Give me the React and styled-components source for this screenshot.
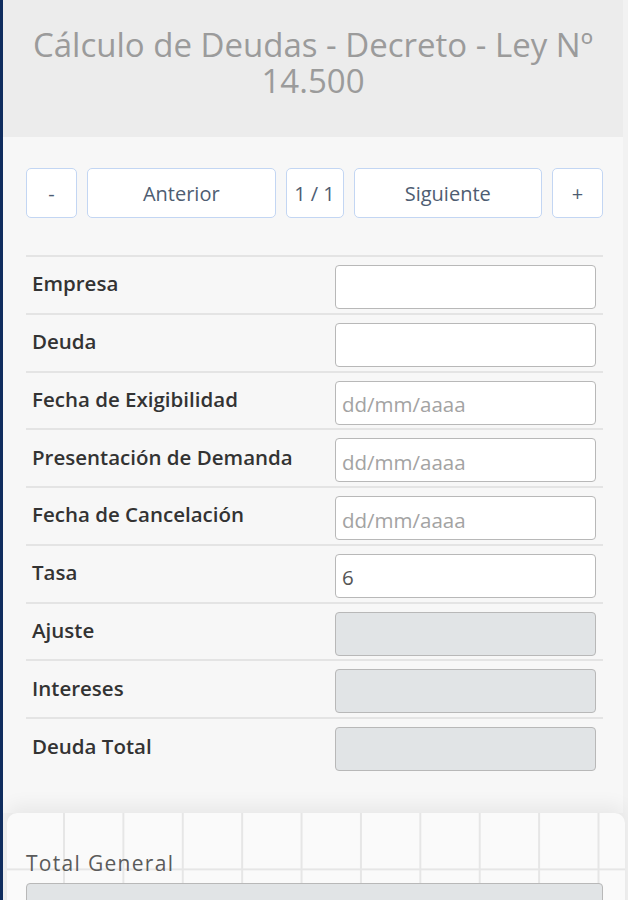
import React from 'react'
import styled, { createGlobalStyle } from 'styled-components'

const GlobalStyle = createGlobalStyle`
  html, body {
    margin: 0;
    padding: 0;
    background: #f2f2f2;
    font-family: "Open Sans", "Noto Sans", sans-serif;
  }
  * {
    box-sizing: border-box;
  }
`;

const Page = styled.div`
  min-height: 900px;
  border-left: 3px solid #102d5e;
  overflow: hidden;
`;

const Panel = styled.div`
  margin-right: 5px;
  background: #f7f7f7;
  padding-bottom: 36px;
`;

const Header = styled.div`
  height: 137px;
  background: #ececec;
  padding: 27px 10px 0;
`;

const Title = styled.h1`
  margin: 0;
  font-size: 33px;
  line-height: 36px;
  font-weight: 400;
  color: #9b9b9b;
  text-align: center;
`;

const Body = styled.div`
  padding: 31px 20px 0 23px;
`;

const Pager = styled.div`
  display: flex;
  gap: 10px;
  margin-bottom: 37px;
`;

const PagerButton = styled.button`
  flex: ${({ $grow }) => ($grow ? 1 : 'none')};
  width: ${({ $w }) => ($w ? `${$w}px` : 'auto')};
  height: 50px;
  background: #ffffff;
  border: 1.5px solid #c3d6f3;
  border-radius: 5px;
  font-family: "Open Sans", "Noto Sans", sans-serif;
  font-size: 20px;
  color: #4e5d72;
  padding: 0;
`;

const Table = styled.div`
  border-top: 2px solid #e4e4e4;
`;

const Row = styled.div`
  display: grid;
  grid-template-columns: 309px 1fr;
  height: 57.75px;
  border-bottom: ${({ $last }) => ($last ? 'none' : '2px solid #e4e4e4')};
`;

const Label = styled.div`
  display: flex;
  align-items: center;
  padding: 0 0 3px 6px;
  font-size: 20.5px;
  font-weight: 600;
  color: #333333;
  white-space: nowrap;
`;

const Cell = styled.div`
  padding: 8px 7px 0 0;
`;

const Field = styled.input`
  width: 100%;
  height: 44px;
  border: 1.5px solid #b8b8b8;
  border-radius: 4px;
  background: ${({ disabled }) => (disabled ? '#e1e4e6' : '#ffffff')};
  padding: 3px 6px 0;
  font-family: "Open Sans", "Noto Sans", sans-serif;
  font-size: 20.5px;
  color: #555555;
  outline: none;
  &::placeholder {
    color: #a3a3a3;
  }
`;

const TotalCard = styled.div`
  margin: 0 3px 0 4px;
  height: 120px;
  border-radius: 10px 10px 0 0;
  background-color: #fafafa;
  background-image:
    linear-gradient(to right, #e6e6e6 1.5px, transparent 1.5px),
    linear-gradient(to bottom, #e6e6e6 1.5px, transparent 1.5px);
  background-size: 59.4px 59.4px;
  background-position: 56px -4px;
  box-shadow: 0 -8px 18px rgba(0, 0, 0, 0.06);
  padding: 36px 22px 0 19px;
`;

const TotalLabel = styled.div`
  font-size: 21px;
  letter-spacing: 1.3px;
  color: #5a5a5a;
  line-height: 28px;
  margin-bottom: 6px;
`;

const TotalField = styled(Field)`
  height: 46px;
`;

const fields = [
  { label: 'Empresa' },
  { label: 'Deuda' },
  { label: 'Fecha de Exigibilidad', placeholder: 'dd/mm/aaaa' },
  { label: 'Presentación de Demanda', placeholder: 'dd/mm/aaaa' },
  { label: 'Fecha de Cancelación', placeholder: 'dd/mm/aaaa' },
  { label: 'Tasa', value: '6' },
  { label: 'Ajuste', disabled: true },
  { label: 'Intereses', disabled: true },
  { label: 'Deuda Total', disabled: true },
];

export default function App() {
  return (
    <Page>
      <GlobalStyle />
      <Panel>
        <Header>
          <Title>Cálculo de Deudas - Decreto - Ley Nº 14.500</Title>
        </Header>
        <Body>
          <Pager>
            <PagerButton $w={51}>-</PagerButton>
            <PagerButton $grow>Anterior</PagerButton>
            <PagerButton $w={58}>1 / 1</PagerButton>
            <PagerButton $grow>Siguiente</PagerButton>
            <PagerButton $w={51}>+</PagerButton>
          </Pager>
          <Table>
            {fields.map((f, i) => (
              <Row key={f.label} $last={i === fields.length - 1}>
                <Label>{f.label}</Label>
                <Cell>
                  <Field
                    type="text"
                    placeholder={f.placeholder}
                    defaultValue={f.value}
                    disabled={f.disabled}
                  />
                </Cell>
              </Row>
            ))}
          </Table>
        </Body>
      </Panel>
      <TotalCard>
        <TotalLabel>Total General</TotalLabel>
        <TotalField type="text" disabled />
      </TotalCard>
    </Page>
  );
}
